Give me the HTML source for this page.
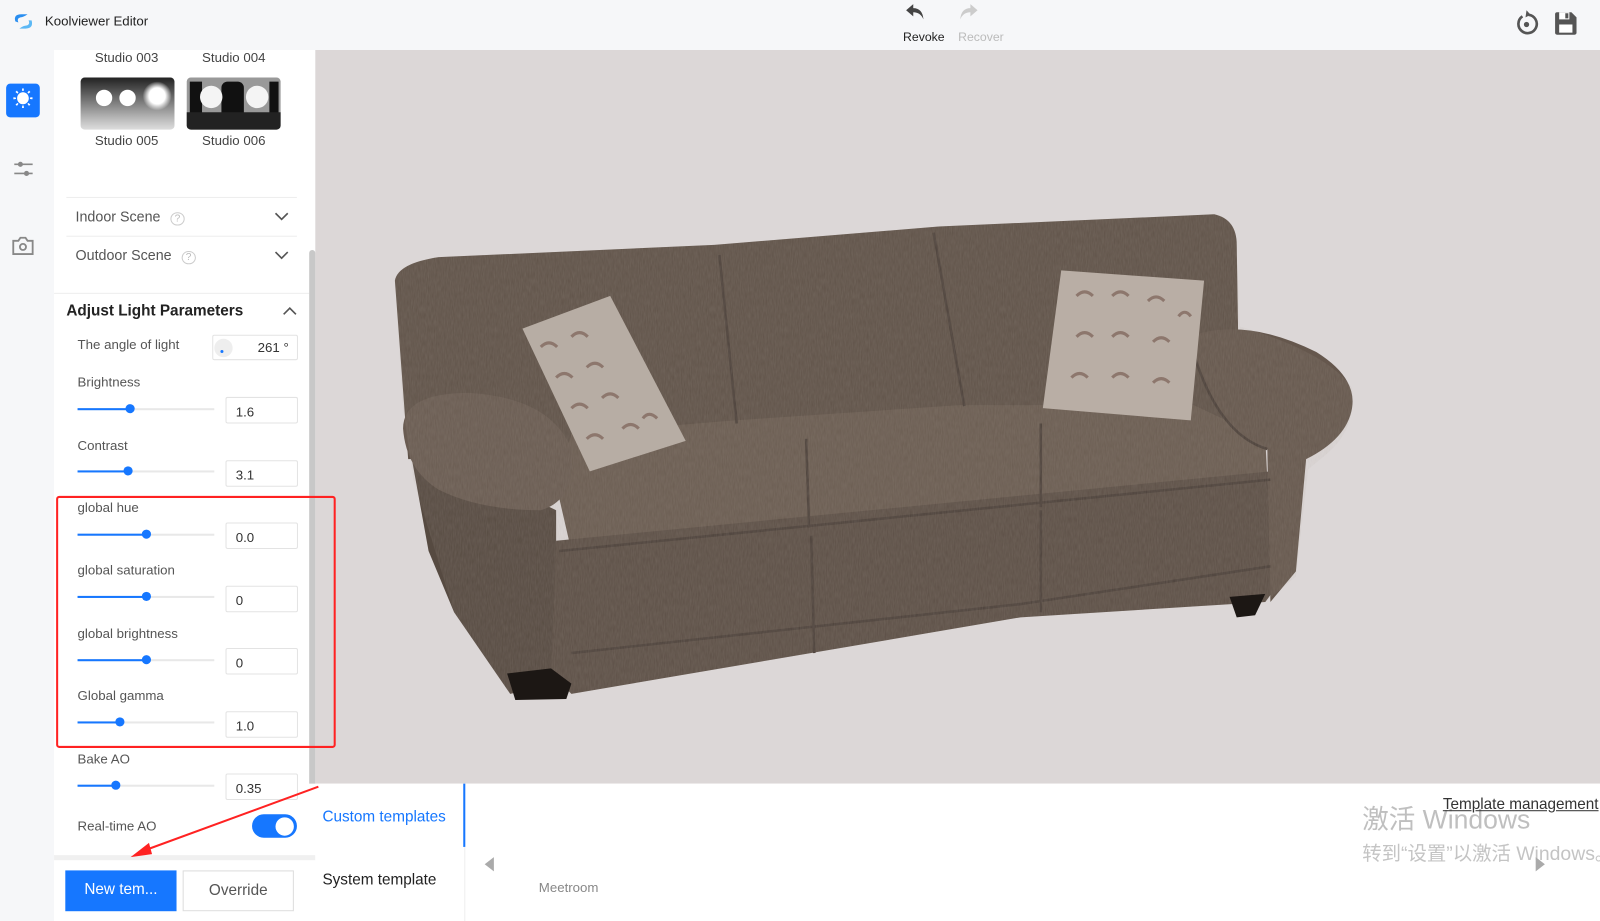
<!DOCTYPE html>
<html><head><meta charset="utf-8">
<style>
*{margin:0;padding:0;box-sizing:border-box}
body{width:1600px;height:903px;overflow:hidden;background:#fff;font-family:"Liberation Sans","Noto Sans CJK SC",sans-serif;color:#333}
#w{position:absolute;left:0;top:0;width:1568px;height:885px;transform:scale(1.0204);transform-origin:0 0}
.a{position:absolute}
.top{left:0;top:0;width:1568px;height:49px;background:#f6f7f9}
.rail{left:0;top:49px;width:53px;height:854px;background:#f6f7f9}
.panel{left:53px;top:49px;width:256px;height:854px;background:#fff}
.view{left:309px;top:49px;width:1260px;height:719px;background:#dcd7d7}
.lbl{font-size:13px;color:#555}
.track{height:2px;background:#e8e8e8;width:134px;left:76px}
.fill{height:2px;background:#1677ff;left:76px}
.thumb{width:9px;height:9px;border-radius:50%;background:#1677ff}
.box{left:221px;width:71px;height:26px;border:1px solid #e3e3e3;border-radius:2px;font-size:13px;color:#333;padding:6px 9px}
.thumbimg{width:92px;height:51px;border-radius:4px}
.stl{font-size:13px;color:#444}
</style></head><body><div id="w">
<div class="a top"></div>
<svg class="a" style="left:11px;top:11px" width="24" height="20" viewBox="0 0 24 20"><path d="M4 10 Q2 3 10 3 L16 3 Q12 6 9 6 Q5 7 7 11Z" fill="#2a8ef0"/><path d="M20 9 Q22 17 14 17 L8 17 Q12 14 15 14 Q19 13 17 9Z" fill="#5bb8f5"/></svg>
<div class="a" style="left:44px;top:13px;font-size:13px;color:#222">Koolviewer Editor</div>
<svg class="a" style="left:886px;top:1px" width="22" height="20" viewBox="0 0 22 20"><path d="M9 3 L2 9 L9 15 L9 11 Q16 11 19 18 Q18 7 9 7Z" fill="#444"/></svg>
<svg class="a" style="left:938px;top:1px" width="22" height="20" viewBox="0 0 22 20"><path d="M13 3 L20 9 L13 15 L13 11 Q6 11 3 18 Q4 7 13 7Z" fill="#ccc"/></svg>
<div class="a" style="left:885px;top:29px;font-size:12px;color:#222">Revoke</div>
<div class="a" style="left:939px;top:29px;font-size:12px;color:#bbb">Recover</div>
<svg class="a" style="left:1483px;top:8px" width="26" height="28" viewBox="0 0 26 28"><path d="M9 8 A9 9 0 1 0 15 6.5" fill="none" stroke="#555" stroke-width="2.6"/><path d="M13 2 L17 6.5 L12 9Z" fill="#555"/><circle cx="13" cy="16" r="2.6" fill="#555"/></svg>
<svg class="a" style="left:1522px;top:11px" width="24" height="24" viewBox="0 0 24 24"><path d="M2 3 Q2 1 4 1 L18 1 L23 6 L23 21 Q23 23 21 23 L4 23 Q2 23 2 21Z" fill="#555"/><rect x="6" y="1" width="10" height="7" fill="#fff"/><rect x="12" y="2" width="3" height="5" fill="#555"/><rect x="6" y="13" width="13" height="8" fill="#fff"/></svg>

<div class="a rail"></div>
<div class="a" style="left:6px;top:82px;width:33px;height:33px;background:#1677ff;border-radius:4px;color:#fff;font-size:20px;text-align:center;line-height:33px">☀</div>
<svg class="a" style="left:12px;top:156px" width="22" height="20" viewBox="0 0 22 20"><path d="M2 5 H20 M2 14 H20" stroke="#888" stroke-width="1.6"/><circle cx="8" cy="5" r="2.5" fill="#888"/><circle cx="14" cy="14" r="2.5" fill="#888"/></svg>
<svg class="a" style="left:11px;top:231px" width="23" height="20" viewBox="0 0 23 20"><path d="M2 5 H7 L9 2 H14 L16 5 H21 V18 H2Z" fill="none" stroke="#888" stroke-width="1.8"/><circle cx="11.5" cy="11" r="3" fill="none" stroke="#888" stroke-width="1.8"/></svg>

<div class="a panel"></div>
<div class="a stl" style="left:93px;top:49px">Studio 003</div>
<div class="a stl" style="left:198px;top:49px">Studio 004</div>
<div class="a thumbimg" style="left:79px;top:76px;background:linear-gradient(#222,#bbb 80%,#ddd)"></div>
<div class="a" style="left:94px;top:88px;width:16px;height:16px;border-radius:50%;background:#fff"></div>
<div class="a" style="left:117px;top:88px;width:16px;height:16px;border-radius:50%;background:#fff"></div>
<div class="a" style="left:140px;top:80px;width:28px;height:28px;border-radius:50%;background:radial-gradient(#fff 40%,rgba(255,255,255,0) 72%)"></div>
<div class="a thumbimg" style="left:183px;top:76px;background:#999"></div>
<div class="a" style="left:186px;top:80px;width:12px;height:44px;background:#111"></div>
<div class="a" style="left:217px;top:80px;width:22px;height:44px;background:#111;border-radius:6px"></div>
<div class="a" style="left:264px;top:80px;width:9px;height:44px;background:#111"></div>
<div class="a" style="left:196px;top:84px;width:22px;height:22px;border-radius:50%;background:#f4f4f4"></div>
<div class="a" style="left:241px;top:84px;width:22px;height:22px;border-radius:50%;background:#f4f4f4"></div>
<div class="a" style="left:183px;top:110px;width:92px;height:17px;background:#222;border-radius:0 0 4px 4px"></div>
<div class="a stl" style="left:93px;top:130px">Studio 005</div>
<div class="a stl" style="left:198px;top:130px">Studio 006</div>
<div class="a" style="left:65px;top:193px;width:226px;height:1px;background:#eee"></div>
<div class="a" style="left:74px;top:204px;font-size:14px;color:#555">Indoor Scene <span style="font-size:10px;color:#bbb;border:1px solid #ccc;border-radius:50%;padding:0 3px;margin-left:6px">?</span></div>
<div class="a" style="left:65px;top:231px;width:226px;height:1px;background:#eee"></div>
<div class="a" style="left:74px;top:242px;font-size:14px;color:#555">Outdoor Scene <span style="font-size:10px;color:#bbb;border:1px solid #ccc;border-radius:50%;padding:0 3px;margin-left:6px">?</span></div>
<svg class="a" style="left:269px;top:207px" width="14" height="10"><path d="M1 2 L7 8 L13 2" stroke="#555" fill="none" stroke-width="1.6"/></svg>
<svg class="a" style="left:269px;top:245px" width="14" height="10"><path d="M1 2 L7 8 L13 2" stroke="#555" fill="none" stroke-width="1.6"/></svg>
<div class="a" style="left:53px;top:287px;width:250px;height:1px;background:#eee"></div>
<div class="a" style="left:65px;top:296px;font-size:15px;font-weight:bold;color:#222">Adjust Light Parameters</div>
<svg class="a" style="left:277px;top:300px" width="14" height="10"><path d="M1 8 L7 2 L13 8" stroke="#555" fill="none" stroke-width="1.6"/></svg>
<div class="a lbl" style="left:76px;top:330px">The angle of light</div>
<div class="a box" style="left:208px;top:328px;width:84px;height:25px;text-align:right;padding:4px 8px">261 °</div>
<div class="a" style="left:210px;top:332px;width:18px;height:18px;border-radius:50%;background:#eee"></div>
<div class="a" style="left:216px;top:343px;width:3px;height:3px;border-radius:50%;background:#1677ff"></div>

<div class="a lbl" style="left:76px;top:367px">Brightness</div>
<div class="a track" style="top:400px"></div><div class="a fill" style="top:400px;width:51px"></div><div class="a thumb" style="left:123px;top:396px"></div><div class="a box" style="top:389px">1.6</div>
<div class="a lbl" style="left:76px;top:429px">Contrast</div>
<div class="a track" style="top:461px"></div><div class="a fill" style="top:461px;width:49px"></div><div class="a thumb" style="left:121px;top:457px"></div><div class="a box" style="top:451px">3.1</div>
<div class="a lbl" style="left:76px;top:490px">global hue</div>
<div class="a track" style="top:523px"></div><div class="a fill" style="top:523px;width:67px"></div><div class="a thumb" style="left:139px;top:519px"></div><div class="a box" style="top:512px">0.0</div>
<div class="a lbl" style="left:76px;top:551px">global saturation</div>
<div class="a track" style="top:584px"></div><div class="a fill" style="top:584px;width:67px"></div><div class="a thumb" style="left:139px;top:580px"></div><div class="a box" style="top:574px">0</div>
<div class="a lbl" style="left:76px;top:613px">global brightness</div>
<div class="a track" style="top:646px"></div><div class="a fill" style="top:646px;width:67px"></div><div class="a thumb" style="left:139px;top:642px"></div><div class="a box" style="top:635px">0</div>
<div class="a lbl" style="left:76px;top:674px">Global gamma</div>
<div class="a track" style="top:707px"></div><div class="a fill" style="top:707px;width:41px"></div><div class="a thumb" style="left:113px;top:703px"></div><div class="a box" style="top:697px">1.0</div>
<div class="a lbl" style="left:76px;top:736px">Bake AO</div>
<div class="a track" style="top:769px"></div><div class="a fill" style="top:769px;width:37px"></div><div class="a thumb" style="left:109px;top:765px"></div><div class="a box" style="top:758px">0.35</div>
<div class="a lbl" style="left:76px;top:802px">Real-time AO</div>
<div class="a" style="left:247px;top:798px;width:44px;height:23px;border-radius:12px;background:#1677ff"></div>
<div class="a" style="left:270px;top:801px;width:18px;height:18px;border-radius:50%;background:#fff"></div>
<div class="a" style="left:53px;top:838px;width:256px;height:5px;background:#f0f0f0"></div>
<div class="a" style="left:64px;top:853px;width:109px;height:40px;background:#1677ff;color:#fff;font-size:15px;text-align:center;padding-top:10px">New tem...</div>
<div class="a" style="left:179px;top:853px;width:109px;height:40px;border:1px solid #ddd;color:#555;font-size:15px;text-align:center;padding-top:10px">Override</div>

<div class="a view"></div>
<svg class="a" style="left:0;top:0" width="1568" height="885">
<defs><filter id="n"><feTurbulence type="fractalNoise" baseFrequency="0.9 0.15" numOctaves="2"/><feColorMatrix values="0 0 0 0 0.45 0 0 0 0 0.4 0 0 0 0 0.35 0 0 0 0.22 0"/><feComposite in2="SourceGraphic" operator="in"/></filter></defs>
<g>
<path d="M387 275 Q390 258 430 252 L700 240 L920 222 L1190 210 Q1212 215 1212 240 L1215 430 L400 450 Z" fill="#5f5248"/>
<path d="M400 430 L420 540 L445 600 L500 680 L545 670 L545 500 Z" fill="#564a41"/>
<path d="M545 475 L560 425 L720 412 L940 397 L1170 397 L1240 430 L1242 470 L1020 497 L790 517 L560 540 Z" fill="#6a5c51"/>
<path d="M545 530 L1245 462 L1262 560 L1240 590 L1000 605 L560 680 L540 660Z" fill="#5c4f46"/>
<path d="M1165 330 Q1220 310 1290 345 Q1330 370 1325 400 Q1320 430 1280 450 L1270 560 L1245 590 L1242 440 Q1190 425 1165 330Z" fill="#65574d"/>
<path d="M395 420 Q395 385 460 385 Q540 390 560 440 Q565 490 530 500 Q470 500 430 480 Q398 460 395 420Z" fill="#695b51"/>
<path d="M705 250 L722 415 M915 228 L945 398 M790 430 L793 517 M1020 415 L1020 497 M795 525 L798 640 M1020 500 L1020 600 M548 540 L1245 470 M560 640 L1000 592 L1245 555 M1165 330 Q1190 425 1242 440" stroke="#4c413a" stroke-width="2.5" fill="none"/>
<path d="M387 275 Q390 258 430 252 L700 240 L920 222 L1190 210 Q1212 215 1212 240 L1215 320 Q1300 345 1325 380 Q1330 420 1300 445 L1282 460 L1270 565 L1240 590 L1000 605 L560 680 L500 680 L445 600 L405 470 L395 400Z" fill="#000" filter="url(#n)"/>
<path d="M512 322 L598 290 L672 432 L578 462Z" fill="#b7ada4"/>
<path d="M1040 265 L1180 275 L1167 412 L1022 400Z" fill="#b9aea5"/>
<g stroke="#7a5f55" stroke-width="3" fill="none" opacity="0.7">
<path d="M530 340 q8 -8 16 0 M560 330 q8 -8 16 0 M545 370 q8 -8 16 0 M575 360 q8 -8 16 0 M560 400 q8 -8 16 0 M590 390 q8 -8 16 0 M575 430 q8 -8 16 0 M610 420 q8 -8 16 0 M630 410 q6 -8 14 0"/>
<path d="M1055 290 q8 -8 16 0 M1090 290 q8 -8 16 0 M1125 295 q8 -8 16 0 M1055 330 q8 -8 16 0 M1090 330 q8 -8 16 0 M1130 335 q8 -8 16 0 M1050 370 q8 -8 16 0 M1090 370 q8 -8 16 0 M1130 375 q8 -8 16 0 M1155 310 q6 -8 12 0"/>
</g>
<path d="M497 660 L540 655 L560 670 L555 685 L505 686Z" fill="#1c1714"/>
<path d="M1205 585 L1240 582 L1230 603 L1212 605Z" fill="#1c1714"/>
</g>
</svg>
<div class="a" style="left:309px;top:768px;width:1260px;height:135px;background:#fff"></div>
<div class="a" style="left:316px;top:792px;font-size:15px;color:#1677ff">Custom templates</div>
<div class="a" style="left:454px;top:768px;width:2px;height:62px;background:#1677ff"></div>
<div class="a" style="left:455px;top:830px;width:1px;height:73px;background:#eee"></div>
<div class="a" style="left:316px;top:854px;font-size:15px;color:#222">System template</div>
<svg class="a" style="left:473px;top:839px" width="12" height="16"><path d="M11 1 L2 8 L11 15Z" fill="#aaa"/></svg>
<div class="a" style="left:528px;top:862px;font-size:13px;color:#888">Meetroom</div>
<div class="a" style="left:1335px;top:788px;font-size:26px;color:#bfbfbf;line-height:30px">激活 Windows</div>
<div class="a" style="left:1335px;top:822px;font-size:19px;color:#c4c4c4;white-space:nowrap">转到“设置”以激活 Windows。</div>
<div class="a" style="left:1414px;top:780px;font-size:15px;color:#333;text-decoration:underline;white-space:nowrap">Template management</div>
<svg class="a" style="left:1504px;top:839px" width="12" height="16"><path d="M1 1 L10 8 L1 15Z" fill="#aaa"/></svg>
<div class="a" style="left:303px;top:245px;width:6px;height:523px;background:#c8c8c8;border-radius:3px 3px 0 0"></div>
<div class="a" style="left:55px;top:486px;width:274px;height:247px;border:2px solid #f22;border-radius:3px"></div>
<svg class="a" style="left:0;top:0" width="1568" height="885"><path d="M312 771 L140 834" stroke="#f22" stroke-width="2"/><path d="M128 840 L146 826 L149 837Z" fill="#f22"/></svg>
</div></body></html>
